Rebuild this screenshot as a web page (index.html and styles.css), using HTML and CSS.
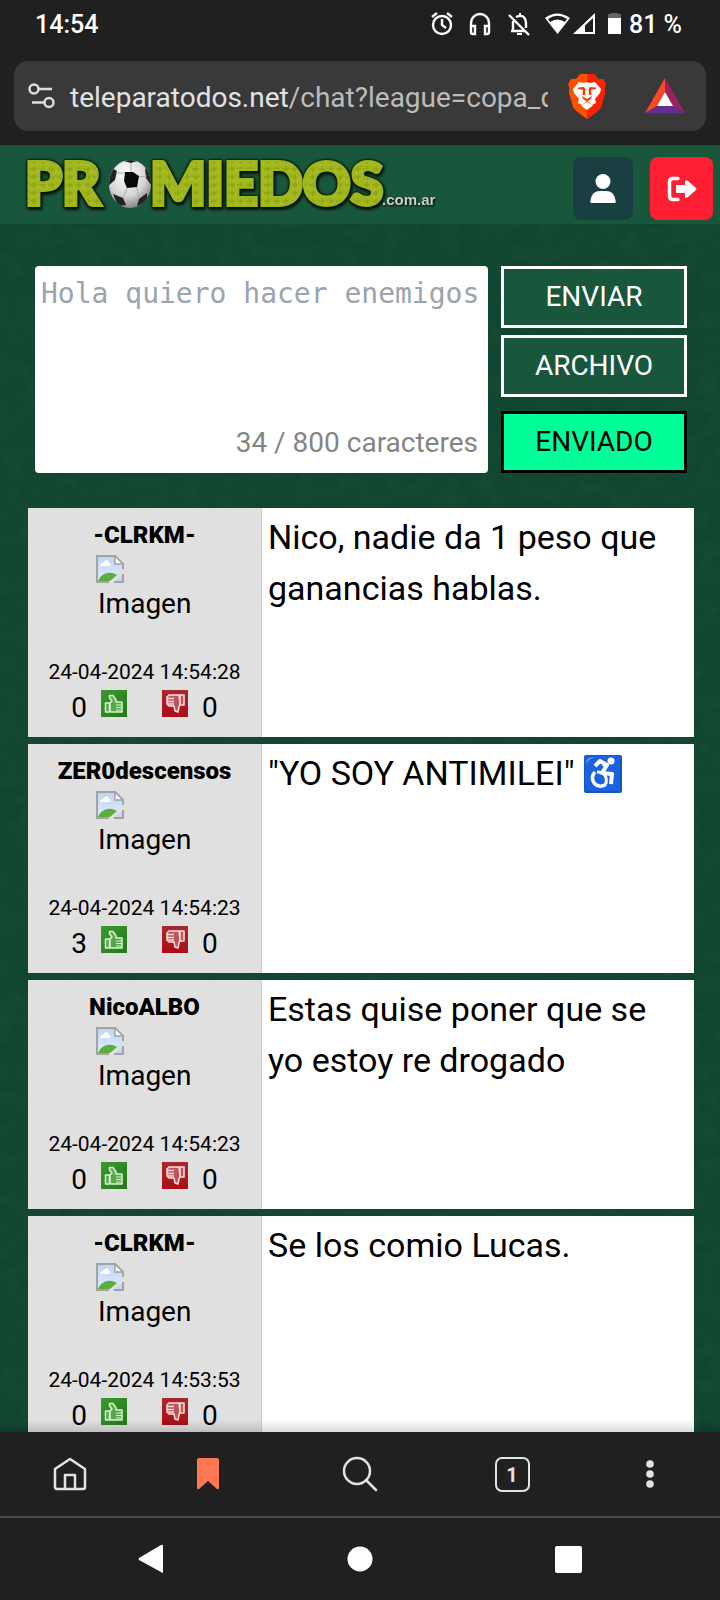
FILE: index.html
```html
<!DOCTYPE html>
<html lang="es">
<head>
<meta charset="utf-8">
<meta name="viewport" content="width=device-width, initial-scale=1">
<title>Promiedos chat</title>
<link rel="stylesheet" href="styles.css">
</head>
<body>
<svg class="defs" width="0" height="0" aria-hidden="true">
  <defs>
    <linearGradient id="sky" x1="0" y1="0" x2="0" y2="1"><stop offset="0" stop-color="#bdd3f7"/><stop offset="1" stop-color="#e2edfd"/></linearGradient>
    <linearGradient id="greenBox" x1="0" y1="0" x2="1" y2="1"><stop offset="0" stop-color="#3c9a30"/><stop offset="1" stop-color="#237a18"/></linearGradient>
    <linearGradient id="redBox" x1="0" y1="0" x2="0" y2="1"><stop offset="0" stop-color="#a52a30"/><stop offset="1" stop-color="#ad0d15"/></linearGradient>
    <symbol id="broken" viewBox="0 0 28 28">
      <path d="M1 1H19L27 9V14L14 27H1Z" fill="url(#sky)"/>
      <path d="M4 11C4 8 7 8 8 7C9 4 13 5 13 8C15 8 15 11 13 11Z" fill="#fff"/>
      <path d="M2 26C5 19 12 16 19 19L21 20L14 26Z" fill="#5bae3c"/>
      <path d="M27 19V27H18Z" fill="#c3d8f5"/>
      <path d="M27 14V9L19 1H1V27H13M27 19V27H18" fill="none" stroke="#a3a3a3" stroke-width="2"/>
      <path d="M19 1V9H27Z" fill="#fff" stroke="#a3a3a3" stroke-width="1.5"/>
    </symbol>
    <symbol id="up" viewBox="0 0 26 27">
      <path d="M0 0H26V27H0Z" fill="url(#greenBox)"/>
      <path d="M4.500 13H8.500V22H4.500ZM9 13L11 11L8.500 8V5.500H12L15 10V12H21V22H10L9 21Z" fill="#57a84d" stroke="#d9f2d2" stroke-width="1.5" stroke-linejoin="round"/>
      <path d="M15 15H21M15 17.500H21M15 20H20" stroke="#d9f2d2" stroke-width="1.2"/>
    </symbol>
    <symbol id="down" viewBox="0 0 26 27">
      <path d="M0 0H26V27H0Z" fill="url(#redBox)"/>
      <path d="M18 5H22V15H18ZM17 5H7L5 7V14L7 16H12L13 21L16 22L17 17L18 14Z" fill="#bd545a" stroke="#fbdede" stroke-width="1.5" stroke-linejoin="round"/>
      <path d="M5 8.500H12M5 11.500H12M6 14H12" stroke="#fbdede" stroke-width="1.3"/>
    </symbol>
  </defs>
</svg>

<header class="status">
  <span class="clock">14:54</span>
  <svg class="status-icons" width="194" height="24" viewBox="0 0 194 24" fill="none" stroke="#fff" stroke-width="2.400" aria-hidden="true">
    <circle cx="12" cy="13" r="9"/><path d="M12 7V13L16 16M2 5L7 1M22 5L17 1"/>
    <path d="M41 20V11A9 9 0 0 1 59 11V20M41 14H45V22H43Q41 22 41 20ZM59 14H55V22H57Q59 22 59 20Z"/>
    <path d="M79 3L99 23M83 9V18M81 19H95M86 5Q95 1 96 11V16"/><path d="M87 21H92V23H87ZM89 1H91V4H89Z" fill="#fff" stroke="none"/>
    <path d="M115 6Q127 -3 140 6L127.500 22Z" fill="#fff" stroke="none"/><path d="M118 7Q127.500 .5 137 7L135 10Q127.500 5 120 10Z" fill="#202020" stroke="none"/>
    <path d="M143 22L165 1V22Z" fill="#fff" stroke="none"/><path d="M155 13.500L163 6V20H155Z" fill="#202020" stroke="none"/>
    <path d="M178 6V2H181V1H188V2H191V6Z" fill="#666" stroke="none"/><path d="M178 6H191V22H178Z" fill="#fff" stroke="none"/>
  </svg>
  <span class="battery">81 %</span>
</header>

<div class="urlbar">
  <svg width="28" height="28" viewBox="0 0 28 28" fill="none" stroke="#dedede" stroke-width="2.500" aria-hidden="true"><circle cx="7" cy="7" r="4.500"/><path d="M12 7H25M5 20.500H17"/><circle cx="22" cy="20.500" r="4.500"/></svg>
  <div class="url"><span class="host">teleparatodos.net</span>/chat?league=copa_d</div>
  <svg class="brave" width="38" height="45" viewBox="0 0 38 45" aria-label="Brave" role="img">
    <path d="M12 0H26L30 5L35 5L38 10L36.500 14L37 19L33 33Q32 36 19 45Q6 36 5 33L1 19L1.500 14L0 10L3 5H8Z" fill="#ff5000"/>
    <path d="M19 0H26L30 5L35 5L38 10L36.500 14L37 19L33 33Q32 36 19 45Z" fill="#ff2000"/>
    <path d="M11 8L16 9L19 8L22 9L27 8L33 15L32 19L27 25L28 29L24 31L19 27L14 31L10 29L11 25L6 19L5 15Z" fill="#fff"/>
    <path d="M10 13.500L16 13L17.500 15.500L17 21H14.500L15 16L10 15ZM28 13.500L22 13L20.500 15.500L21 21H23.500L23 16L28 15Z" fill="#ff3a00"/>
    <path d="M14 22L19 25L24 22L23 25L19 27.500L15 25Z" fill="#ff3a00"/>
    <path d="M19 28L25 31.500L19 36L13 31.500Z" fill="#fff"/>
  </svg>
  <svg width="40" height="36" viewBox="0 0 40 36" aria-label="BAT" role="img"><path d="M20 0V14L12 28L0 35Z" fill="#ff4724"/><path d="M20 0L40 35L28 28L20 14Z" fill="#9e1f63"/><path d="M0 35L12 28H28L40 35Z" fill="#662d91"/><path d="M20 14L28 28H12Z" fill="#fff"/></svg>
</div>

<main class="page">
  <svg class="turf" aria-hidden="true" width="100%" height="100%">
    <filter id="grain" x="0" y="0" width="100%" height="100%"><feTurbulence type="fractalNoise" baseFrequency="0.05 0.06" numOctaves="4" seed="4"/><feColorMatrix values="0 0 0 0 .2  0 0 0 0 .3  0 0 0 0 .16  .9 0 0 0 -.3"/></filter>
    <rect width="100%" height="100%" filter="url(#grain)"/>
  </svg>

  <div class="site-head">
    <svg class="logo" width="416" height="60" viewBox="0 0 416 60" role="img" aria-label="Promiedos.com.ar">
      <defs>
        <pattern id="cloth" width="9" height="8" patternUnits="userSpaceOnUse"><path d="M0 0H9V8H0Z" fill="#9fb61c"/><path d="M0 2H9M3 0V8" stroke="#8ba012" stroke-width="1"/><path d="M0 6H5M7 1V6" stroke="#b2c72c" stroke-width="1"/></pattern>
        <radialGradient id="leather" cx=".42" cy=".3" r=".75"><stop offset="0" stop-color="#fff"/><stop offset=".6" stop-color="#d5d5d5"/><stop offset="1" stop-color="#777"/></radialGradient>
        <clipPath id="ballClip"><ellipse cx="108" cy="25" rx="21" ry="24"/></clipPath>
      </defs>
      <g class="logo-word"><text x="3" y="46">PR</text><text x="128" y="46">MIEDOS</text></g>
      <ellipse cx="108" cy="25" rx="21" ry="24" fill="url(#leather)"/>
      <g clip-path="url(#ballClip)"><path d="M103 13L111 13L117 17L115 28L105 29L102 22Z" fill="#080808"/><path d="M98 1L109 4L118 1V-3H98ZM86 16L90 9L95 12L93 21L86 27ZM123 9L130 15V27L124 19ZM91 35L101 39L104 46L96 47ZM117 40L125 34L125 43L115 47Z" fill="#222"/><path d="M109 4L109 13M94 14L103 14M117 18L125 17M105 29L101 39M115 28L117 40" stroke="#aaa" fill="none"/></g>
      <text class="logo-domain" x="360" y="46">.com.ar</text>
    </svg>
    <button class="icon-btn user" type="button" aria-label="Usuario"><svg width="26" height="30" viewBox="0 0 26 30" fill="#fff"><circle cx="13" cy="7.500" r="7.500"/><path d="M1 29Q0 29 .5 26Q2 17 10 17H16Q24 17 25.500 26Q26 29 25 29Z"/></svg></button>
    <button class="icon-btn exit" type="button" aria-label="Salir"><svg width="30" height="26" viewBox="0 0 30 26"><path d="M11 2.500H6Q2.500 2.500 2.500 6V20Q2.500 23.500 6 23.500H11" fill="none" stroke="#fff" stroke-width="3.500" stroke-linecap="round"/><path d="M10 9H18V6Q18 3 21 5L29 12Q30 13 29 14L21 21Q18 23 18 20V17H10Q9 17 9 16V10Q9 9 10 9Z" fill="#fff"/></svg></button>
  </div>

  <form class="composer">
    <div class="field">
      <textarea class="message" aria-label="Mensaje" placeholder="Hola quiero hacer enemigos"></textarea>
      <span class="counter">34 / 800 caracteres</span>
    </div>
    <div class="actions">
      <button type="button">ENVIAR</button>
      <button type="button">ARCHIVO</button>
      <button type="button" class="sent">ENVIADO</button>
    </div>
  </form>

  <section class="posts">
    <article class="post">
      <div class="author">
        <strong class="name">-CLRKM-</strong>
        <div class="avatar"><svg width="28" height="28"><use href="#broken"/></svg><span>Imagen</span></div>
        <time class="date">24-04-2024 14:54:28</time>
        <div class="votes"><span>0</span><button type="button" aria-label="Me gusta"><svg width="26" height="27"><use href="#up"/></svg></button><button type="button" class="no" aria-label="No me gusta"><svg width="26" height="27"><use href="#down"/></svg></button><span>0</span></div>
      </div>
      <p class="text">Nico, nadie da 1 peso que ganancias hablas.</p>
    </article>
    <article class="post">
      <div class="author">
        <strong class="name">ZER0descensos</strong>
        <div class="avatar"><svg width="28" height="28"><use href="#broken"/></svg><span>Imagen</span></div>
        <time class="date">24-04-2024 14:54:23</time>
        <div class="votes"><span>3</span><button type="button" aria-label="Me gusta"><svg width="26" height="27"><use href="#up"/></svg></button><button type="button" class="no" aria-label="No me gusta"><svg width="26" height="27"><use href="#down"/></svg></button><span>0</span></div>
      </div>
      <p class="text">"YO SOY ANTIMILEI" <svg class="emoji" width="38" height="38" viewBox="0 0 38 38" role="img" aria-label="♿"><rect width="38" height="38" rx="2" fill="#1757bd"/><path d="M1 1H36V36H1Z" fill="#1b62e0"/><path d="M2 9Q2 2 11 2Q4 4 2 9Z" fill="#68aef3"/><circle cx="27" cy="6" r="3.500" fill="#fff"/><path d="M11 11L16 6L23 10L18 18L28 19L27 29M19 9L23 11" fill="none" stroke="#fff" stroke-width="4" stroke-linejoin="round"/><path d="M11 17A8 8 0 1 0 22 29" fill="none" stroke="#fff" stroke-width="3.500"/><path d="M13 17Q24 17 22 29" fill="none" stroke="#fff" stroke-width="3"/></svg></p>
    </article>
    <article class="post">
      <div class="author">
        <strong class="name">NicoALBO</strong>
        <div class="avatar"><svg width="28" height="28"><use href="#broken"/></svg><span>Imagen</span></div>
        <time class="date">24-04-2024 14:54:23</time>
        <div class="votes"><span>0</span><button type="button" aria-label="Me gusta"><svg width="26" height="27"><use href="#up"/></svg></button><button type="button" class="no" aria-label="No me gusta"><svg width="26" height="27"><use href="#down"/></svg></button><span>0</span></div>
      </div>
      <p class="text">Estas quise poner que se yo estoy re drogado</p>
    </article>
    <article class="post">
      <div class="author">
        <strong class="name">-CLRKM-</strong>
        <div class="avatar"><svg width="28" height="28"><use href="#broken"/></svg><span>Imagen</span></div>
        <time class="date">24-04-2024 14:53:53</time>
        <div class="votes"><span>0</span><button type="button" aria-label="Me gusta"><svg width="26" height="27"><use href="#up"/></svg></button><button type="button" class="no" aria-label="No me gusta"><svg width="26" height="27"><use href="#down"/></svg></button><span>0</span></div>
      </div>
      <p class="text">Se los comio Lucas.</p>
    </article>
  </section>
</main>

<nav class="toolbar">
  <button type="button" class="home" aria-label="Inicio"><svg width="34" height="34" viewBox="0 0 34 34" fill="none" stroke="#e3e3e3" stroke-width="2.500" stroke-linejoin="round"><path d="M2 12L17 2L32 12V30Q32 32 30 32H4Q2 32 2 30Z"/><path d="M12 32V18H22V32"/></svg></button>
  <button type="button" aria-label="Marcador"><svg width="24" height="34" viewBox="0 0 24 34"><path d="M3 1H21Q23 1 23 3V31Q23 33 21 32L12 24L3 32Q1 33 1 31V3Q1 1 3 1Z" fill="#ff7654"/></svg></button>
  <button type="button" aria-label="Buscar"><svg width="36" height="36" viewBox="0 0 36 36" fill="none" stroke="#e3e3e3" stroke-width="2.500" stroke-linecap="round"><circle cx="15" cy="15" r="13"/><path d="M24 24L34 34"/></svg></button>
  <button type="button" aria-label="Pestañas"><span class="tabs">1</span></button>
  <button type="button" class="menu" aria-label="Menú"><svg width="8" height="28" viewBox="0 0 8 28" fill="#e3e3e3"><circle cx="4" cy="4" r="3.800"/><circle cx="4" cy="14" r="3.800"/><circle cx="4" cy="24" r="3.800"/></svg></button>
</nav>
<nav class="system">
  <button type="button" aria-label="Atrás"><svg width="26" height="30" viewBox="0 0 26 30"><path d="M1 14L23 1Q25 0 25 2V28Q25 30 23 28L1 16Q0 15 1 14Z" fill="#fff"/></svg></button>
  <button type="button" aria-label="Pantalla de inicio"><svg width="26" height="26" viewBox="0 0 26 26"><circle cx="13" cy="13" r="12.500" fill="#fff"/></svg></button>
  <button type="button" aria-label="Recientes"><svg width="27" height="27" viewBox="0 0 27 27"><rect width="27" height="27" rx="2" fill="#fff"/></svg></button>
</nav>
</body>
</html>
```
FILE: styles.css
```css
* { box-sizing: border-box; }
body {
  margin: 0;
  height: 100vh;
  display: flex;
  flex-direction: column;
  background: #202020;
  color: #000;
  font-family: Roboto, sans-serif;
  font-size: 28px;
}
button { font: inherit; margin: 0; padding: 0; border: 0; background: none; color: inherit; }
svg { display: block; flex: none; }
.defs { position: absolute; }

.status {
  flex: none;
  height: 61px;
  display: flex;
  align-items: flex-start;
  padding: 10px 38px 0 35px;
  color: #fff;
  font-size: 25px;
  font-weight: 500;
  line-height: 30px;
}
.status-icons { margin: 2px 5px 0 auto; }

.urlbar {
  flex: none;
  height: 70px;
  margin: 0 14px 14px;
  padding: 0 21px 0 13px;
  border-radius: 14px;
  background: #393939;
  display: flex;
  align-items: center;
}
.url {
  flex: 1;
  min-width: 0;
  margin-left: 15px;
  padding-top: 3px;
  overflow: hidden;
  white-space: nowrap;
  color: #bcbcbc;
  line-height: 36px;
}
.host { color: #e2e2e2; }
.brave { margin: 0 39px 0 20px; }

.page {
  flex: 1;
  min-height: 0;
  overflow: hidden;
  position: relative;
  background: #10452f;
}
.turf { position: absolute; inset: 0; opacity: .14; }
.page::after {
  content: "";
  position: absolute;
  inset: auto 0 0;
  height: 12px;
  background: linear-gradient(transparent, rgba(0, 0, 0, .15));
}

.site-head {
  position: relative;
  display: flex;
  align-items: center;
  height: 79px;
  padding: 8px 7px 0 22px;
  background: #19573d;
}
.logo { margin-right: auto; overflow: visible; }
.logo-word text {
  font: 900 59px Lato, sans-serif;
  fill: url(#cloth);
  stroke: #9fb61c;
  stroke-width: 4px;
  paint-order: stroke;
  filter: drop-shadow(0 0 1px #0b1a08) drop-shadow(0 0 1px #0b1a08) drop-shadow(1px 2px 1px #061008);
}
.logo-domain {
  font: bold 15px "Liberation Sans", sans-serif;
  fill: #c9cfcc;
  filter: drop-shadow(1px 1px 1px #000);
}
.icon-btn {
  flex: none;
  height: 63px;
  border-radius: 8px;
  display: flex;
  align-items: center;
  justify-content: center;
}
.user { width: 60px; margin-right: 17px; background: #193f43; }
.exit { width: 63px; background: #ff1f33; }

.composer {
  position: relative;
  display: flex;
  gap: 13px;
  padding: 42px 33px 0 35px;
}
.field { flex: 1; min-width: 0; display: grid; }
.field > * { grid-area: 1 / 1; }
.message {
  width: 100%;
  height: 207px;
  padding: 10px 6px;
  border: 0;
  border-radius: 4px;
  resize: none;
  overflow: hidden;
  background: #fff;
  font: 28px/36px "DejaVu Sans Mono", monospace;
}
.message::placeholder { color: #9ca3af; opacity: 1; }
.counter {
  place-self: end;
  padding: 0 10px 14px;
  color: #858585;
  line-height: 32px;
}
.actions { width: 186px; display: flex; flex-direction: column; gap: 7px; }
.actions button {
  height: 62px;
  padding-bottom: 2px;
  border: 3px solid #fff;
  background: #19573d;
  color: #fff;
}
.actions .sent {
  margin-top: auto;
  border-color: #000;
  background: #00ff99;
  color: #000;
}

.posts {
  position: relative;
  display: flex;
  flex-direction: column;
  gap: 7px;
  padding: 35px 26px 0 28px;
}
.post { display: flex; min-height: 229px; background: #fff; }
.author {
  flex: none;
  width: 234px;
  border-right: 1px solid #c4d3cd;
  background: #e0e0e0;
  display: flex;
  flex-direction: column;
  align-items: center;
}
.name { margin-top: 12px; font-size: 24px; font-weight: 900; line-height: 30px; }
.avatar { width: 97px; height: 96px; margin-top: 5px; line-height: 42px; }
.avatar span { display: block; padding-left: 2px; }
.date { margin-top: 8px; font-size: 21px; line-height: 26px; }
.votes { display: flex; align-items: flex-start; margin-top: 5px; line-height: 36px; }
.votes button { margin-left: 14px; }
.votes .no { margin: 0 14px 0 35px; }
.text { flex: 1; margin: 0; padding: 4px 6px; font-size: 34px; line-height: 51px; }
.emoji { display: inline-block; margin-left: 1px; vertical-align: -8px; }

.toolbar {
  flex: none;
  height: 86px;
  border-bottom: 2px solid #484848;
  display: grid;
  grid-template-columns: 132fr 152fr 152fr 152fr 132fr;
}
.toolbar button { display: flex; align-items: center; justify-content: center; }
.toolbar .home { padding-left: 8px; }
.toolbar .menu { padding-right: 8px; }
.tabs {
  width: 35px;
  height: 35px;
  border: 2px solid #e3e3e3;
  border-radius: 7px;
  color: #e3e3e3;
  font-size: 20px;
  font-weight: 700;
  line-height: 32px;
}
.system {
  flex: none;
  height: 82px;
  padding: 0 138px;
  display: flex;
  align-items: center;
  justify-content: space-between;
}
```
